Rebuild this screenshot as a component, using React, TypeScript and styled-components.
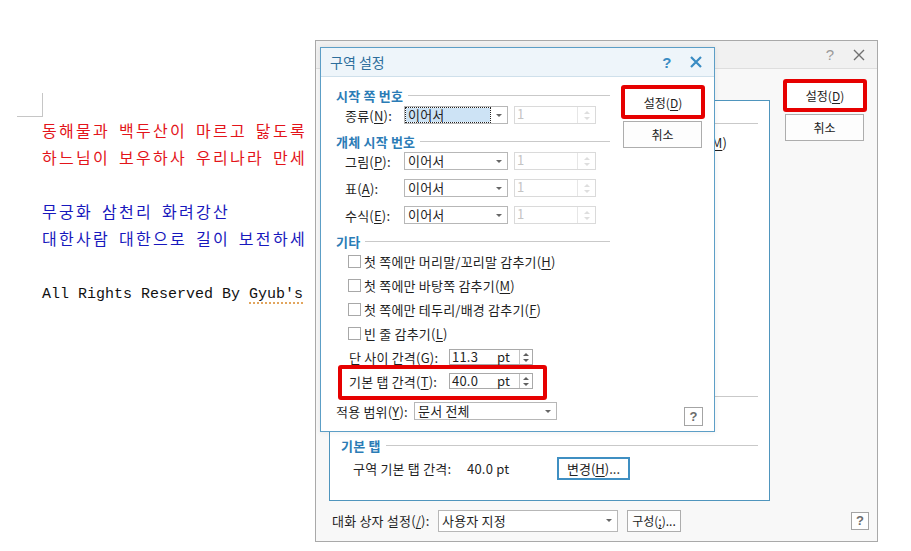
import React from "react";
import styled, { createGlobalStyle, css } from "styled-components";

const UI_FONT = `"Noto Sans CJK KR", "Noto Sans", sans-serif`;

const GlobalStyle = createGlobalStyle`
  html, body { margin: 0; padding: 0; background: #fff; }
  body { width: 911px; height: 551px; overflow: hidden; }
  * { box-sizing: border-box; }
`;

const Stage = styled.div`
  position: relative;
  width: 911px;
  height: 551px;
  background: #fff;
  overflow: hidden;
`;

/* ---------- document behind the dialogs ---------- */

const Doc = styled.div`
  padding: 93px 0 0 17px;
  font-family: "Noto Sans CJK KR", sans-serif;
  font-size: 16px;
  line-height: 27px;
`;

const MarginMark = styled.div`
  width: 26px;
  height: 24px;
  border-right: 1px solid #c6c6c6;
  border-bottom: 1px solid #c6c6c6;
`;

const Line = styled.p<{ $color: string }>`
  margin: 0 0 0 25px;
  color: ${(p) => p.$color};
  letter-spacing: 2.3px;
  word-spacing: 3px;
  white-space: nowrap;
`;

const Blank = styled.div`
  height: 27px;
`;

const LatinLine = styled.p`
  margin: 2px 0 0 25px;
  font-family: "Liberation Mono", monospace;
  font-size: 15px;
  color: #111;
  white-space: nowrap;
`;

const Misspelled = styled.span`
  text-decoration: underline dotted #d9892b;
  text-underline-offset: 5px;
`;

/* ---------- shared dialog parts ---------- */

const Window = styled.div<{ $x: number; $y: number; $w: number; $h: number }>`
  position: absolute;
  left: ${(p) => p.$x}px;
  top: ${(p) => p.$y}px;
  width: ${(p) => p.$w}px;
  height: ${(p) => p.$h}px;
  display: flex;
  flex-direction: column;
  font-family: ${UI_FONT};
  font-size: 13px;
  letter-spacing: 0.2px;
  color: #1f1f1f;
`;

const BgWindow = styled(Window)`
  border: 1px solid #a9a9a9;
  background: #f8f8f8;
`;

const FrontWindow = styled(Window)`
  border: 1px solid #5c9ec6;
  background: #fff;
  box-shadow: 0 0 6px rgba(0, 0, 0, 0.08);
`;

const TitleBar = styled.div<{ $front?: boolean }>`
  flex: none;
  height: ${(p) => (p.$front ? 29 : 28)}px;
  display: flex;
  align-items: center;
  padding: 0 12px 0 9px;
  background: ${(p) => (p.$front ? "#eef5fa" : "#f1f1f1")};
  border-bottom: 1px solid ${(p) => (p.$front ? "#cfe0eb" : "#dedede")};
`;

const Title = styled.span`
  flex: 1;
  font-size: 14px;
  letter-spacing: 0;
  color: #2d6e9c;
`;

const TitleIcons = styled.div`
  display: flex;
  align-items: center;
  gap: 18px;
`;

const HelpGlyph = styled.span<{ $front?: boolean }>`
  font-family: "Liberation Sans", Arial, sans-serif;
  font-size: 15px;
  font-weight: ${(p) => (p.$front ? 700 : 400)};
  color: ${(p) => (p.$front ? "#3a8cc3" : "#9a9a9a")};
  width: 10px;
  text-align: center;
`;

const CloseIcon = ({ color, weight }: { color: string; weight: number }) => (
  <svg width="12" height="12" viewBox="0 0 12 12">
    <path d="M1 1L11 11M11 1L1 11" stroke={color} strokeWidth={weight} />
  </svg>
);

const U = styled.span`
  text-decoration: underline;
  text-underline-offset: 2px;
`;

const Button = styled.button<{ $w: number; $h: number }>`
  width: ${(p) => p.$w}px;
  height: ${(p) => p.$h}px;
  flex: none;
  padding: 0;
  border: 1px solid #adadad;
  background: #fdfdfd;
  font-family: ${UI_FONT};
  font-size: 12px;
  color: #222;
`;

const RedButton = styled(Button)`
  border: 4px solid #e60000;
  border-radius: 3px;
  background: #fff;
`;

const CancelButton = styled(Button)`
  margin: 2px 0 0 2px;
`;

const FocusButton = styled(Button)`
  border: 2px solid #3f8fc2;
  background: #fff;
  font-size: 13px;
`;

const HelpButton = styled.div<{ $size: number }>`
  width: ${(p) => p.$size}px;
  height: ${(p) => p.$size}px;
  flex: none;
  display: flex;
  align-items: center;
  justify-content: center;
  border: 1px solid #a4a4a4;
  background: #fff;
  font-family: "Liberation Sans", Arial, sans-serif;
  font-size: 13px;
  font-weight: 700;
  color: #6c6c6c;
`;

const Heading = styled.div<{ $mt: number }>`
  flex: none;
  display: flex;
  align-items: center;
  gap: 5px;
  height: 16px;
  margin-top: ${(p) => p.$mt}px;
  color: #2b7cb6;
  font-weight: 700;
  white-space: nowrap;
  &::after {
    content: "";
    flex: 1;
    height: 1px;
    background: #c9c9c9;
  }
`;

const FieldRow = styled.div<{ $mt: number; $indent: number; $h?: number }>`
  flex: none;
  display: flex;
  align-items: center;
  height: ${(p) => p.$h ?? 20}px;
  margin-top: ${(p) => p.$mt}px;
  padding-left: ${(p) => p.$indent}px;
  white-space: nowrap;
`;

const Label = styled.span<{ $w: number }>`
  width: ${(p) => p.$w}px;
  flex: none;
  white-space: nowrap;
`;

const Select = styled.div<{ $w: number; $h?: number }>`
  width: ${(p) => p.$w}px;
  height: ${(p) => p.$h ?? 18}px;
  flex: none;
  display: flex;
  align-items: center;
  padding-left: 1px;
  border: 1px solid #b7b7b7;
  background: #fff;
`;

const SelectText = styled.span<{ $focus?: boolean }>`
  flex: 1;
  height: 14px;
  line-height: 14px;
  padding-left: 2px;
  ${(p) =>
    p.$focus &&
    css`
      background: #cde3f5;
      outline: 1px dotted #222;
    `}
`;

const Caret = styled.span`
  width: 17px;
  flex: none;
  display: flex;
  justify-content: center;
  &::before {
    content: "";
    border-top: 3px solid #666;
    border-left: 3px solid transparent;
    border-right: 3px solid transparent;
  }
`;

const SpinBox = styled.div<{ $w: number; $off?: boolean; $gap?: number }>`
  width: ${(p) => p.$w}px;
  height: ${(p) => (p.$off ? 18 : 16)}px;
  flex: none;
  display: flex;
  margin-left: ${(p) => p.$gap ?? 0}px;
  border: 1px solid ${(p) => (p.$off ? "#dadada" : "#a9a9a9")};
  background: #fff;
  color: ${(p) => (p.$off ? "#c4c4c4" : "#1f1f1f")};
  line-height: 14px;
`;

const SpinValue = styled.span`
  flex: 1;
  display: flex;
  justify-content: space-between;
  padding: 0 9px 0 2px;
`;

const SpinArrows = styled.span<{ $off?: boolean }>`
  width: ${(p) => (p.$off ? 18 : 13)}px;
  flex: none;
  display: flex;
  flex-direction: column;
  align-items: center;
  justify-content: center;
  gap: 3px;
  border-left: 1px solid ${(p) => (p.$off ? "#e6e6e6" : "#c4c4c4")};
`;

const Arrow = styled.span<{ $up?: boolean; $off?: boolean }>`
  width: 0;
  height: 0;
  border-left: 3px solid transparent;
  border-right: 3px solid transparent;
  ${(p) =>
    p.$up
      ? css`border-bottom: 3px solid ${p.$off ? "#dedede" : "#606060"};`
      : css`border-top: 3px solid ${p.$off ? "#dedede" : "#606060"};`}
`;

const Spin = ({ value, unit, off, w, gap }: { value: string; unit?: string; off?: boolean; w: number; gap?: number }) => (
  <SpinBox $w={w} $off={off} $gap={gap}>
    <SpinValue>
      <span>{value}</span>
      {unit && <span>{unit}</span>}
    </SpinValue>
    <SpinArrows $off={off}>
      <Arrow $up $off={off} />
      <Arrow $off={off} />
    </SpinArrows>
  </SpinBox>
);

/* ---------- front dialog ---------- */

const FrontBody = styled.div`
  flex: 1;
  display: flex;
  gap: 11px;
  padding: 8px 9px 5px 15px;
`;

const LeftCol = styled.div`
  width: 274px;
  display: flex;
  flex-direction: column;
  padding-top: 2px;
`;

const RightCol = styled.div`
  width: 84px;
  display: flex;
  flex-direction: column;
  align-items: flex-start;
`;

const BottomHelp = styled(HelpButton)`
  margin-top: auto;
  align-self: flex-end;
  margin-right: 2px;
`;

const CheckRow = styled.div<{ $mt: number }>`
  display: flex;
  align-items: center;
  gap: 3px;
  height: 20px;
  margin-top: ${(p) => p.$mt}px;
  padding-left: 12px;
  white-space: nowrap;
`;

const CheckBox = styled.span`
  width: 13px;
  height: 13px;
  flex: none;
  border: 1px solid #a8a8a8;
  background: #fff;
`;

const CheckText = styled.span`
  white-space: nowrap;
`;

const RedFrame = styled.div`
  width: 209px;
  margin-left: 2px;
  padding: 4px 0 7px 7px;
  border: 4px solid #e60000;
  border-radius: 3px;
`;

/* ---------- background dialog ---------- */

const BgBody = styled.div`
  flex: 1;
  display: flex;
  flex-direction: column;
  padding: 10px 10px 9px 13px;
`;

const BgTop = styled.div`
  display: flex;
  align-items: flex-start;
  gap: 13px;
`;

const PanelBox = styled.div`
  width: 441px;
  height: 401px;
  margin-top: 21px;
  display: flex;
  flex-direction: column;
  padding: 14px 11px 0 11px;
  border: 1px solid #4f95bd;
  background: #fff;
`;

const EndRow = styled.div<{ $w: number; $mt: number }>`
  width: ${(p) => p.$w}px;
  height: 20px;
  margin-top: ${(p) => p.$mt}px;
  display: flex;
  align-items: center;
  justify-content: flex-end;
  white-space: nowrap;
`;

const ButtonCol = styled.div`
  width: 84px;
  display: flex;
  flex-direction: column;
  align-items: flex-start;
`;

const BgBottom = styled.div`
  height: 23px;
  margin-top: 8px;
  display: flex;
  align-items: center;
  gap: 6px;
  padding-left: 3px;
`;

const GapButton = styled(Button)`
  margin-left: 3px;
`;

const PushRight = styled.div`
  flex: 1;
`;

const CornerHelp = styled(HelpButton)`
  margin-right: -2px;
`;

const Value = styled.span<{ $w: number }>`
  width: ${(p) => p.$w}px;
  flex: none;
`;

export default function App() {
  return (
    <Stage>
      <GlobalStyle />
      <Doc>
        <MarginMark />
        <Line $color="#e3141a">동해물과 백두산이 마르고 닳도록</Line>
        <Line $color="#e3141a">하느님이 보우하사 우리나라 만세</Line>
        <Blank />
        <Line $color="#1818bd">무궁화 삼천리 화려강산</Line>
        <Line $color="#1818bd">대한사람 대한으로 길이 보전하세</Line>
        <Blank />
        <LatinLine>
          All Rights Reserved By <Misspelled>Gyub's</Misspelled>
        </LatinLine>
      </Doc>

      <BgWindow $x={315} $y={40} $w={563} $h={502}>
        <TitleBar>
          <Title />
          <TitleIcons>
            <HelpGlyph>?</HelpGlyph>
            <CloseIcon color="#707070" weight={1.4} />
          </TitleIcons>
        </TitleBar>
        <BgBody>
          <BgTop>
            <PanelBox>
              <Heading $mt={0} />
              <EndRow $w={386} $mt={1}>
                (<U>M</U>)
              </EndRow>
              <Heading $mt={236} />
              <Heading $mt={33}>기본 탭</Heading>
              <FieldRow $mt={3} $indent={12} $h={24}>
                <Label $w={114}>구역 기본 탭 간격:</Label>
                <Value $w={90}>40.0 pt</Value>
                <FocusButton $w={73} $h={23}>
                  변경(<U>H</U>)...
                </FocusButton>
              </FieldRow>
            </PanelBox>
            <ButtonCol>
              <RedButton $w={84} $h={33}>
                설정(<U>D</U>)
              </RedButton>
              <CancelButton $w={79} $h={27}>
                취소
              </CancelButton>
            </ButtonCol>
          </BgTop>
          <BgBottom>
            <Label $w={100}>
              대화 상자 설정(<U>/</U>):
            </Label>
            <Select $w={180} $h={22}>
              <SelectText>사용자 지정</SelectText>
              <Caret />
            </Select>
            <GapButton $w={54} $h={22}>
              구성(<U>;</U>)...
            </GapButton>
            <PushRight />
            <CornerHelp $size={18}>?</CornerHelp>
          </BgBottom>
        </BgBody>
      </BgWindow>

      <FrontWindow $x={320} $y={47} $w={395} $h={385}>
        <TitleBar $front>
          <Title>구역 설정</Title>
          <TitleIcons>
            <HelpGlyph $front>?</HelpGlyph>
            <CloseIcon color="#3a8cc3" weight={2.2} />
          </TitleIcons>
        </TitleBar>
        <FrontBody>
          <LeftCol>
            <Heading $mt={0}>시작 쪽 번호</Heading>
            <FieldRow $mt={2} $indent={9}>
              <Label $w={59}>
                종류(<U>N</U>):
              </Label>
              <Select $w={104}>
                <SelectText $focus>이어서</SelectText>
                <Caret />
              </Select>
              <Spin value="1" off w={82} gap={6} />
            </FieldRow>
            <Heading $mt={8}>개체 시작 번호</Heading>
            <FieldRow $mt={2} $indent={9}>
              <Label $w={59}>
                그림(<U>P</U>):
              </Label>
              <Select $w={104}>
                <SelectText>이어서</SelectText>
                <Caret />
              </Select>
              <Spin value="1" off w={82} gap={6} />
            </FieldRow>
            <FieldRow $mt={7} $indent={9}>
              <Label $w={59}>
                표(<U>A</U>):
              </Label>
              <Select $w={104}>
                <SelectText>이어서</SelectText>
                <Caret />
              </Select>
              <Spin value="1" off w={82} gap={6} />
            </FieldRow>
            <FieldRow $mt={7} $indent={9}>
              <Label $w={59}>
                수식(<U>E</U>):
              </Label>
              <Select $w={104}>
                <SelectText>이어서</SelectText>
                <Caret />
              </Select>
              <Spin value="1" off w={82} gap={6} />
            </FieldRow>
            <Heading $mt={8}>기타</Heading>
            <CheckRow $mt={2}>
              <CheckBox />
              <CheckText>
                첫 쪽에만 머리말/꼬리말 감추기(<U>H</U>)
              </CheckText>
            </CheckRow>
            <CheckRow $mt={4}>
              <CheckBox />
              <CheckText>
                첫 쪽에만 바탕쪽 감추기(<U>M</U>)
              </CheckText>
            </CheckRow>
            <CheckRow $mt={4}>
              <CheckBox />
              <CheckText>
                첫 쪽에만 테두리/배경 감추기(<U>F</U>)
              </CheckText>
            </CheckRow>
            <CheckRow $mt={4}>
              <CheckBox />
              <CheckText>
                빈 줄 감추기(<U>L</U>)
              </CheckText>
            </CheckRow>
            <FieldRow $mt={6} $indent={13} $h={16}>
              <Label $w={100}>
                단 사이 간격(<U>G</U>):
              </Label>
              <Spin value="11.3" unit="pt" w={84} />
            </FieldRow>
            <RedFrame>
              <FieldRow $mt={0} $indent={0} $h={16}>
                <Label $w={100}>
                  기본 탭 간격(<U>T</U>):
                </Label>
                <Spin value="40.0" unit="pt" w={84} />
              </FieldRow>
            </RedFrame>
            <FieldRow $mt={1} $indent={0}>
              <Label $w={78}>
                적용 범위(<U>Y</U>):
              </Label>
              <Select $w={143}>
                <SelectText>문서 전체</SelectText>
                <Caret />
              </Select>
            </FieldRow>
          </LeftCol>
          <RightCol>
            <RedButton $w={84} $h={34}>
              설정(<U>D</U>)
            </RedButton>
            <CancelButton $w={79} $h={27}>
              취소
            </CancelButton>
            <BottomHelp $size={19}>?</BottomHelp>
          </RightCol>
        </FrontBody>
      </FrontWindow>
    </Stage>
  );
}
